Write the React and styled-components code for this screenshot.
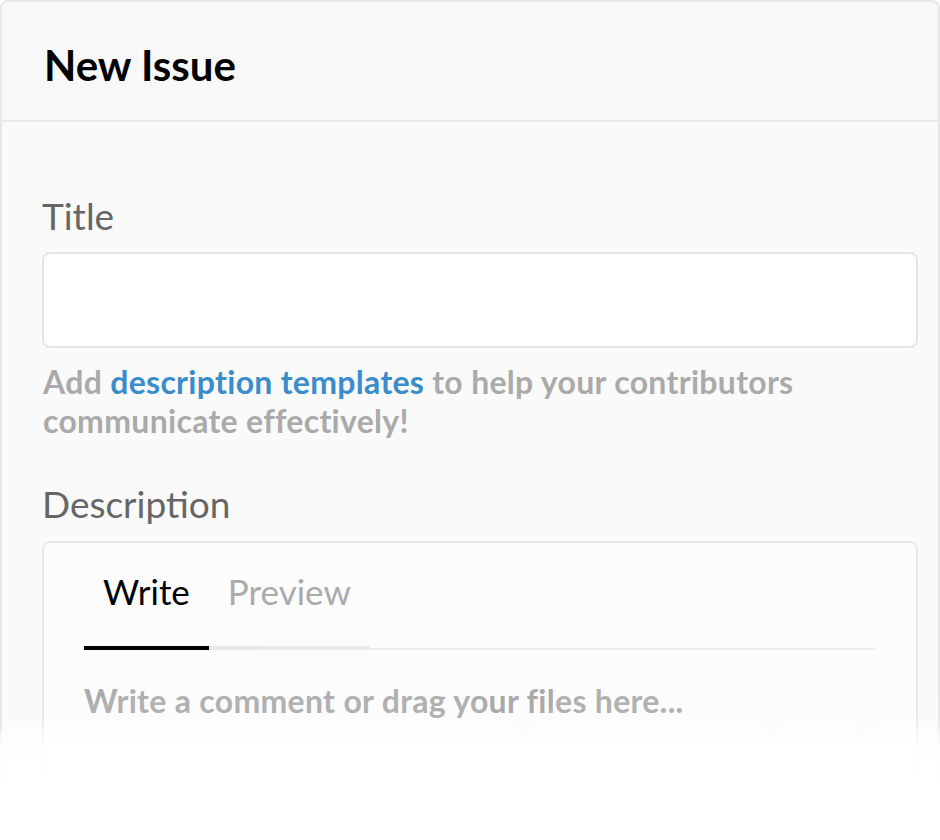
import React from "react";
import styled, { createGlobalStyle } from "styled-components";

const GlobalStyle = createGlobalStyle`
  html, body { margin: 0; padding: 0; background: #ffffff; }
  body { font-family: Lato, "Liberation Sans", sans-serif; }
  * { box-sizing: border-box; }
`;

const Page = styled.div`
  position: relative;
  width: 940px;
  height: 840px;
  overflow: hidden;
  background: #ffffff;
`;

const Card = styled.section`
  height: 100%;
  border: 2px solid #e8e8e8;
  border-bottom: none;
  border-radius: 8px 8px 0 0;
  background: #fafafa;
  overflow: hidden;
`;

const Header = styled.header`
  background: #f8f8f8;
  border-bottom: 2px solid #e8e8e8;
  padding: 38px 42px 30px;
`;

const Heading = styled.h1`
  margin: 0;
  font-size: 42px;
  line-height: 50px;
  font-weight: 700;
  color: #000;
`;

const Body = styled.div`
  padding: 72px 20px 0 40px;
  display: flex;
  flex-direction: column;
`;

const Label = styled.label`
  display: block;
  font-size: 37px;
  line-height: 44px;
  color: #666;
  margin: ${(p) => p.$top || 0}px 0 ${(p) => p.$bottom || 0}px;
`;

const TextInput = styled.div`
  height: 96px;
  border: 2px solid #e6e6e6;
  border-radius: 8px;
  background: #ffffff;
`;

const Helper = styled.p`
  margin: 14px 0 0 1px;
  font-size: 32px;
  line-height: 39px;
  letter-spacing: 0.3px;
  font-weight: 700;
  color: #aaaaaa;
`;

const Link = styled.a`
  color: #3a8dca;
  text-decoration: none;
`;

const EditorBox = styled.div`
  border: 2px solid #e8e8e8;
  border-radius: 8px;
  background: #fcfcfc;
  padding: 26px 40px 0;
  min-height: 320px;
`;

const TabList = styled.div`
  display: flex;
  border-bottom: 2px solid #ededed;
`;

const Tab = styled.div`
  font-size: 35px;
  line-height: 44px;
  padding: 0 19px 33px;
  margin-bottom: -2px;
  border-bottom: 4px solid ${(p) => (p.$active ? "#000" : "#e8e8e8")};
  color: ${(p) => (p.$active ? "#000" : "#aaaaaa")};
`;

const Placeholder = styled.div`
  margin-top: 32px;
  font-size: 32px;
  line-height: 38px;
  letter-spacing: 0.3px;
  font-weight: 700;
  color: #aaaaaa;
`;

const FadeOverlay = styled.svg`
  position: absolute;
  left: 0;
  top: 560px;
  width: 940px;
  height: 280px;
  pointer-events: none;
`;

export default function App() {
  return (
    <>
      <GlobalStyle />
      <Page>
        <Card>
          <Header>
            <Heading>New Issue</Heading>
          </Header>
          <Body>
            <Label $bottom={14}>Title</Label>
            <TextInput />
            <Helper>
              Add <Link href="#">description templates</Link> to help your
              contributors communicate effectively!
            </Helper>
            <Label $top={42} $bottom={15}>
              Description
            </Label>
            <EditorBox>
              <TabList>
                <Tab $active>Write</Tab>
                <Tab>Preview</Tab>
              </TabList>
              <Placeholder>Write a comment or drag your files here...</Placeholder>
            </EditorBox>
          </Body>
        </Card>
        <FadeOverlay viewBox="0 0 940 280">
          <defs>
            <linearGradient id="fadeGrad" x1="0" y1="40" x2="0" y2="280" gradientUnits="userSpaceOnUse">
              <stop offset="0" stopColor="#ffffff" stopOpacity="0.06" />
              <stop offset="0.5" stopColor="#ffffff" stopOpacity="0.08" />
              <stop offset="0.6" stopColor="#ffffff" stopOpacity="0.85" />
              <stop offset="0.8" stopColor="#ffffff" stopOpacity="1" />
              <stop offset="1" stopColor="#ffffff" stopOpacity="1" />
            </linearGradient>
          </defs>
          <polygon
            points="0,170 360,55 524,180 635,43 773,180 830,130 859,180 940,140 940,280 0,280"
            fill="url(#fadeGrad)"
          />
        </FadeOverlay>
      </Page>
    </>
  );
}
